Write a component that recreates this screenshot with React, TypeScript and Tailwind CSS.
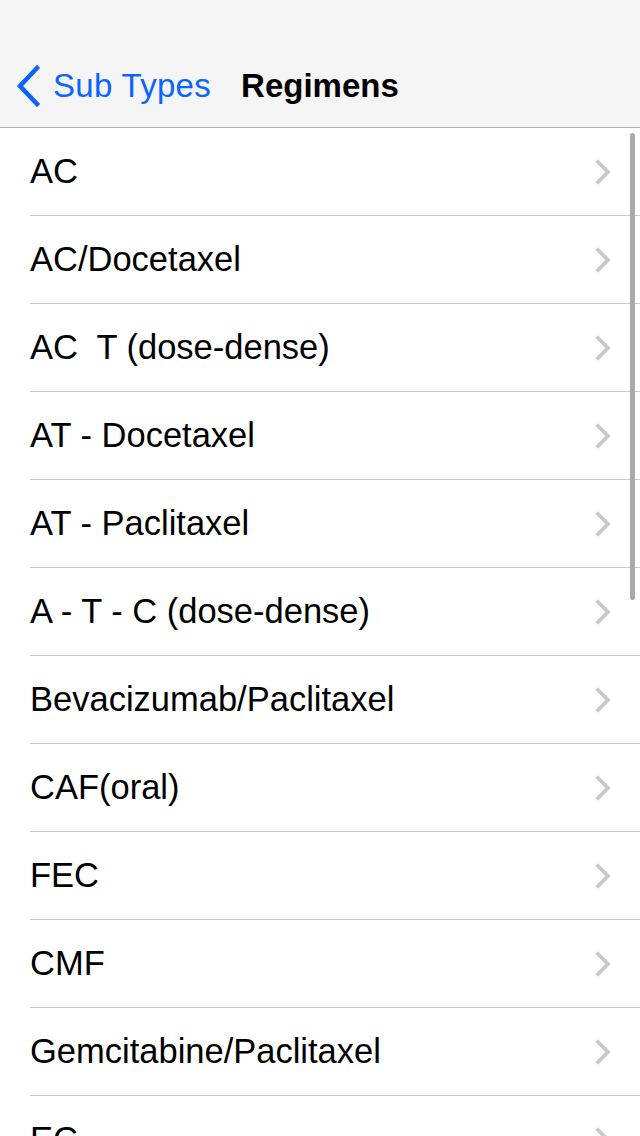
import { useState } from "react";

const regimens = [
  "AC",
  "AC/Docetaxel",
  "AC  T (dose-dense)",
  "AT - Docetaxel",
  "AT - Paclitaxel",
  "A - T - C (dose-dense)",
  "Bevacizumab/Paclitaxel",
  "CAF(oral)",
  "FEC",
  "CMF",
  "Gemcitabine/Paclitaxel",
  "EC",
];

function BackChevron() {
  return (
    <svg width="26" height="42" viewBox="0 0 26 42" fill="none">
      <path
        d="M22 3 L5 21 L22 39"
        stroke="#0a64ff"
        strokeWidth="4.5"
        strokeLinecap="square"
      />
    </svg>
  );
}

function RowChevron() {
  return (
    <svg width="18" height="26" viewBox="0 0 18 26" fill="none">
      <path
        d="M4 3 L14 13 L4 23"
        stroke="#c7c7cc"
        strokeWidth="3.8"
        strokeLinecap="square"
      />
    </svg>
  );
}

export default function App() {
  const [selected, setSelected] = useState<string | null>(null);

  return (
    <div className="relative h-[1136px] w-[640px] overflow-hidden bg-white font-['Liberation_Sans',Arial,sans-serif]">
      <header className="flex h-[128px] items-end border-b border-[#b2b2b2] bg-[#f5f5f5]">
        <div className="flex h-[82px] items-center">
          <button className="ml-[15px] flex items-center gap-[12px] text-[33px] text-[#0a64ff]">
            <BackChevron />
            <span className="tracking-[0.3px]">Sub Types</span>
          </button>
          <h1 className="ml-[30px] text-[33px] font-bold text-black">Regimens</h1>
        </div>
      </header>

      <ul>
        {regimens.map((name) => (
          <li
            key={name}
            onClick={() => setSelected(name)}
            className={`pl-[30px] ${selected === name ? "bg-[#d9d9d9]" : "bg-white"}`}
          >
            <div className="flex h-[88px] items-center justify-between border-b border-[#c8c7cc] pr-[28px]">
              <span className="whitespace-pre text-[34.5px] text-black">{name}</span>
              <RowChevron />
            </div>
          </li>
        ))}
      </ul>

      <div className="absolute right-[5px] top-[133px] h-[467px] w-[5px] rounded-full bg-[#a9a9a9]" />
    </div>
  );
}
